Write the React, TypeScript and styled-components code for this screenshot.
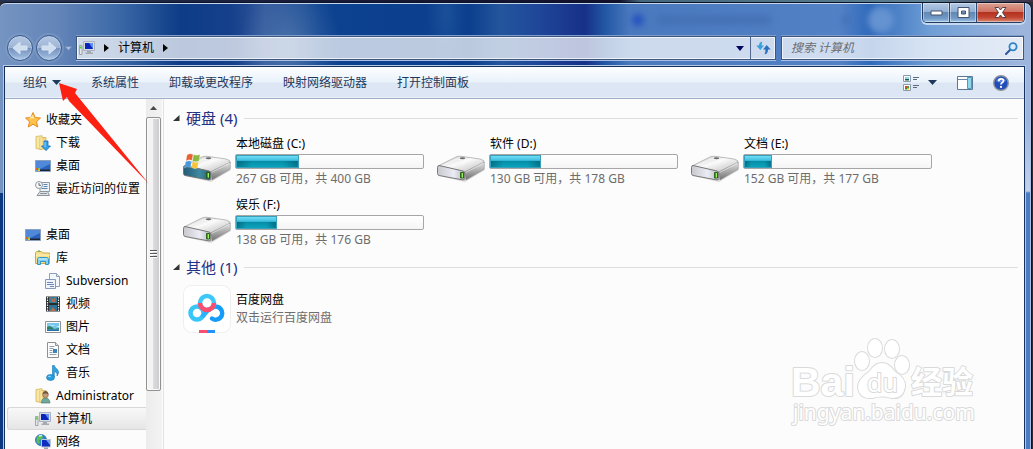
import React from "react";
import styled, { createGlobalStyle, css } from "styled-components";

const GlobalStyle = createGlobalStyle`
  *, *::before, *::after { box-sizing: border-box; }
  body {
    margin: 0;
    overflow: hidden;
    background: #1c2130;
    color: #000;
    font: 12px/16px "Noto Sans", "Noto Sans CJK SC", sans-serif;
  }
  button, input { font: inherit; color: inherit; }
  svg { display: block; flex: none; }
`;

const plainButton = css`
  margin: 0;
  padding: 0;
  border: 0;
  background: none;
  cursor: default;
`;

const Desktop = styled.div`
  height: 100vh;
  padding: 2px 1px 0 0;
  background: linear-gradient(90deg, #26324e 0%, #181b38 30%, #14102c 60%, #46687c 62%, #5c7f92 90%, #403048 100%) top / 100% 2px no-repeat, #2b2c34;
`;

const Window = styled.main`
  display: flex;
  flex-direction: column;
  height: 100%;
  padding: 0 6px 0 4px;
  border: solid #0b1426;
  border-width: 1px 1px 0 0;
  border-radius: 6px 7px 0 0;
  box-shadow: inset 0 1px #c5d7ef, inset -1px 0 #a9bfe4;
  background:
    radial-gradient(ellipse 50px 80px at 290px 45px, #6d91bb88, transparent),
    radial-gradient(ellipse 20px 60px at 446px 10px, #2f68ac66, transparent),
    linear-gradient(transparent 190px, #0d3980 190px) left / 5px 100% no-repeat,
    linear-gradient(#9db5dd 120px, #c3d2eb 188px, #4a7bc3 190px) right / 7px 100% no-repeat,
    linear-gradient(90deg, #7594c1 0, #6284b8 60px, #3a68a6 120px, #0e3c86 180px, #153f8a 230px, #30569b 265px, #0c4290 320px, #0c3f8d 470px, #23559c 500px, #20489a 535px, #173088 585px, #2257a4 605px, #4a79be 630px, #5381c6 840px, #2f6abb 870px, #6f9ed5 930px, #9db5dd 1020px);
`;

const TitleBar = styled.header`
  display: flex;
  justify-content: space-between;
  flex: none;
  height: 33px;
`;

const BackdropTab = styled.div`
  display: flex;
  align-items: center;
  gap: 14px;
  margin-left: auto;
  padding-right: 28px;
  filter: blur(3px);
`;

const BackdropDot = styled.span<{ $large?: boolean }>`
  width: ${(p) => (p.$large ? 26 : 12)}px;
  height: ${(p) => (p.$large ? 26 : 12)}px;
  margin-left: ${(p) => (p.$large ? 4 : 0)}px;
  border-radius: 50%;
  background: ${(p) => (p.$large ? "#6592d0" : "#2452c0")};
`;

const BackdropLine = styled.span<{ $width: number; $push?: boolean }>`
  width: ${(p) => p.$width}px;
  height: 8px;
  margin-left: ${(p) => (p.$push ? 58 : 0)}px;
  background: #4470b4;
`;

const CaptionButtons = styled.div`
  display: flex;
  height: 20px;
  border: 1px solid #253b62;
  border-top: 0;
  border-radius: 0 0 5px 5px;
  box-shadow: 0 1px 0 1px #c4d8f0;
  overflow: hidden;
`;

const CaptionButton = styled.button<{ $close?: boolean }>`
  ${plainButton}
  display: grid;
  place-items: center;
  width: ${(p) => (p.$close ? 47 : 27)}px;
  border-right: ${(p) => (p.$close ? "0" : "1px solid #304a74")};
  box-shadow: inset 0 0 0 1px #ffffff66;
  background: ${(p) =>
    p.$close
      ? "linear-gradient(#dba293, #cf7464 45%, #b4321f 50%, #c14431 75%, #d98a72)"
      : "linear-gradient(#b4c9e4, #92b0d4 45%, #6288b6 50%, #7299c6 80%, #9cc3e4)"};
`;

const NavRow = styled.div`
  display: flex;
  flex: none;
  height: 24px;
  margin-bottom: 6px;
  padding-right: 1px;
`;

const History = styled.nav`
  display: flex;
  align-items: center;
  gap: 3px;
  width: 72px;
  padding-left: 3px;
`;

const RoundButton = styled.button`
  ${plainButton}
  display: grid;
  place-items: center;
  width: 26px;
  height: 26px;
  border: 1px solid #3d5c8d;
  border-radius: 50%;
  background: linear-gradient(#b4c8e3, #9db5d6 48%, #7794c0 52%, #8fadd4 80%, #b6cde9);
  box-shadow: inset 0 0 0 1px #c6d6eb99, 0 0 0 2px #8aa5cb66;
`;

const HistoryMenu = styled.button`
  ${plainButton}
  padding: 4px 0;
`;

const glassField = css`
  border: 1px solid #3d5680;
  background: #ffffffb8;
  box-shadow: inset 0 0 0 1px #ffffffb0, 0 1px #a9c0e0, 0 -1px #7f9dca;
`;

const AddressBar = styled.div`
  ${glassField}
  display: flex;
  align-items: center;
  flex: 1;
  min-width: 200px;
  margin-right: 5px;
  padding-left: 2px;
`;

const Crumb = styled.button`
  ${plainButton}
  display: flex;
  align-items: center;
  gap: 9px;
  height: 20px;
  padding-left: 9px;
`;

const AddressMenu = styled.button`
  ${plainButton}
  margin-left: auto;
  padding: 6px;
`;

const Refresh = styled.button`
  ${plainButton}
  align-self: stretch;
  display: grid;
  place-items: center;
  width: 25px;
  border-left: 1px solid #53698f;
`;

const SearchBox = styled.label`
  ${glassField}
  display: flex;
  align-items: center;
  width: 243px;
  padding: 0 5px 0 9px;
`;

const SearchInput = styled.input`
  flex: 1;
  min-width: 0;
  padding: 0;
  border: 0;
  outline: 0;
  background: none;
  font-style: italic;
  &::placeholder { color: #6a6d73; opacity: 1; }
`;

const Frame = styled.div`
  display: flex;
  flex-direction: column;
  flex: 1;
  min-height: 0;
  border: solid #14305c;
  border-width: 1px 1px 0;
  box-shadow: 0 0 0 1px #b4c9e6;
  background: #fcfcfc;
`;

const Toolbar = styled.div`
  display: flex;
  align-items: center;
  flex: none;
  height: 32px;
  padding: 0 15px 0 3px;
  border-bottom: 1px solid #a0afc9;
  box-shadow: inset 0 -1px #e9f0f9;
  background: linear-gradient(#fdfeff, #eaf2fb 48%, #dde7f4 52%, #dce6f4);
`;

const Command = styled.button`
  ${plainButton}
  display: flex;
  align-items: center;
  gap: 5px;
  padding: 0 15px;
  color: #1e395b;
`;

const ViewTools = styled.div`
  display: flex;
  align-items: center;
  gap: 20px;
  margin-left: auto;
`;

const ToolButton = styled.button`
  ${plainButton}
  display: flex;
  align-items: center;
  gap: 9px;
`;

const Body = styled.div`
  display: flex;
  flex: 1;
  min-height: 0;
`;

const Sidebar = styled.nav`
  width: 141px;
  padding: 9px 0 0 2px;
  overflow: hidden;
`;

const Tree = styled.ul`
  margin: 0 0 23px;
  padding: 0;
  list-style: none;
`;

const TreeItem = styled.button<{ $level: number; $selected?: boolean }>`
  ${plainButton}
  display: flex;
  align-items: center;
  gap: 5px;
  width: 100%;
  height: 23px;
  padding-left: ${(p) => 17 + p.$level * 10}px;
  border: 1px solid transparent;
  border-right: 0;
  white-space: nowrap;
  ${(p) =>
    p.$selected &&
    css`
      border-color: #d8d8d8;
      border-radius: 3px 0 0 3px;
      background: linear-gradient(#f8f8f8, #e6e6e6);
    `}
`;

const ScrollTrack = styled.div`
  display: flex;
  flex-direction: column;
  width: 16px;
  padding-right: 1px;
  background: linear-gradient(90deg, #ececec, #f3f3f3);
`;

const ScrollArrow = styled.button`
  ${plainButton}
  display: grid;
  place-items: center;
  height: 18px;
`;

const ScrollThumb = styled.div`
  display: grid;
  place-items: center;
  height: 274px;
  border: 1px solid #929292;
  border-radius: 2px;
  box-shadow: inset 0 0 0 1px #fafafa;
  background: linear-gradient(90deg, #f4f4f4 45%, #dcdcde 50%, #c9cacd);
`;

const Content = styled.section`
  flex: 1;
  min-width: 0;
  padding: 9px 6px 0 9px;
  border-left: 1px solid #d6e4f5;
  margin-left: 1px;
`;

const Group = styled.section`
  margin-bottom: 9px;
`;

const GroupHeader = styled.h2`
  display: flex;
  align-items: center;
  margin: 0 0 8px;
  font-size: 15px;
  line-height: 20px;
  font-weight: 400;
  color: #1e3287;
  &::after {
    content: "";
    flex: 1;
    height: 1px;
    margin-left: 7px;
    background: #dedede;
  }
`;

const GroupToggle = styled.button`
  ${plainButton}
  width: 13px;
`;

const Items = styled.div`
  display: grid;
  grid-template-columns: repeat(auto-fill, 254px);
  row-gap: 10px;
  padding-left: 10px;
`;

const Item = styled.article`
  display: flex;
  align-items: center;
  gap: 4px;
`;

const ItemText = styled.div`
  display: flex;
  flex-direction: column;
  gap: 2px;
`;

const ItemName = styled.div`
  padding-left: 1px;
`;

const ItemNote = styled.div`
  padding-left: 1px;
  color: #6d6d6d;
  white-space: nowrap;
`;

const Meter = styled.div`
  width: 189px;
  height: 15px;
  padding: 1px 4px 1px 1px;
  border: 1px solid #a6a6a6;
  border-radius: 2px;
  background: linear-gradient(#fff, #f5f5f5);
`;

const MeterFill = styled.div`
  height: 100%;
  box-shadow: 0 0 0 1px #3a9fb9;
  background:
    linear-gradient(90deg, #00485a77, transparent 25%, transparent 75%, #00485a77) bottom / 100% 58% no-repeat,
    linear-gradient(#6fdcf5, #3fbfe0 40%, #068ba5 45%, #0aa4bd);
`;

const Watermark = styled.svg`
  position: absolute;
  right: 50px;
  bottom: 16px;
  pointer-events: none;
`;

const PointerArrow = styled.svg`
  position: absolute;
  left: 59px;
  top: 82px;
  pointer-events: none;
`;

function Caret() {
  return (
    <svg width="9" height="5" viewBox="0 0 9 5">
      <path d="M0 0h9L4.500 5z" fill="#1e395b" />
    </svg>
  );
}

function RightCaret() {
  return (
    <svg width="5" height="8" viewBox="0 0 5 8">
      <path d="M0 0l5 4-5 4z" fill="#050505" />
    </svg>
  );
}

function NavArrow({ back }: { back?: boolean }) {
  return (
    <svg width="18" height="16" viewBox="0 0 18 16">
      <path
        d={back ? "M2 8l7-6v4h7v4H9v4z" : "M16 8L9 2v4H2v4h7v4z"}
        fill="#d0dff0"
        stroke="#d7e3f1"
        strokeLinejoin="round"
      />
    </svg>
  );
}

type IconName =
  | "star" | "download" | "desktop" | "recent" | "library" | "subversion"
  | "video" | "picture" | "document" | "music" | "user" | "computer" | "network";

const folder = (
  <>
    <path d="M1 1.500l6-.8v14L1 13.500z" fill="#f8e7a0" stroke="#d3b45c" strokeWidth=".8" />
    <path d="M5 2.500h6v11.500H5z" fill="#f0d684" stroke="#cfae55" strokeWidth=".7" />
    <path d="M6 2v12" stroke="#fff4c3" />
  </>
);

const icons: Record<IconName, React.ReactNode> = {
  star: (
    <>
      <path d="M8 .5l2.200 5 5.300.5-4 3.600 1.200 5.400L8 12.200 3.300 15l1.200-5.400L.5 6l5.300-.5z" fill="#fdc14c" stroke="#e58a20" strokeLinejoin="round" />
      <path d="M8 3l1.300 3.500H4z" fill="#ffe9a6" />
    </>
  ),
  download: (
    <>
      {folder}
      <path d="M9 6h4v5h2.500L11 15.600 6.500 11H9z" fill="#34a2e8" stroke="#1769b6" strokeWidth=".8" />
      <path d="M10 7v5" stroke="#93dafd" />
    </>
  ),
  desktop: (
    <>
      <path d="M.5 2.500h15v11H.5z" fill="#2a63bf" stroke="#8ba0bd" />
      <path d="M1 3h14v3L5 11H1z" fill="#5089da" />
      <path d="M1 11.500h14V13H1z" fill="#1c2532" />
      <path d="M1 10h2v2H1z" fill="#e4572e" />
      <path d="M3 10h2v2H3z" fill="#8cc63f" />
      <path d="M1 12h2v1H1z" fill="#35a7ee" />
      <path d="M3 12h2v1H3z" fill="#fbc531" />
    </>
  ),
  recent: (
    <>
      <path d="M5 1.500h9.500v9H5z" fill="#eef2f6" stroke="#929ba5" />
      <path d="M8.500 3.500h4M8.500 5.500h4M6.500 7.500h6" stroke="#5d88b4" />
      <path d="M2 14.500h12.500l-2-4H5z" fill="#dfe3e8" stroke="#8c949d" />
      <path d="M5 12.500h7" stroke="#8a929b" />
      <circle cx="4" cy="4" r="3.500" fill="#f6f8fa" stroke="#9098a1" />
      <path d="M4 2v2.300h2" fill="none" stroke="#596878" />
    </>
  ),
  library: (
    <>
      <path d="M.5 2.500l1-1h5l1 1.500h7v10.500H.5z" fill="#f6df8b" stroke="#cbaa4d" />
      <path d="M3 1h2" stroke="#3db54a" />
      <path d="M1 5h14" stroke="#fff3c1" />
      <path d="M2.500 14.500v-5q0-2 2-2h7q2 0 2 2v5h-3v-3h-5v3z" fill="#7fd0f2" stroke="#3494c7" />
      <path d="M3.500 9h9" stroke="#d3f2ff" />
    </>
  ),
  subversion: (
    <>
      <path d="M4.500.5h7l3 3v10h-10z" fill="#f4f8fc" stroke="#8e9fb9" />
      <path d="M11.500.5v3h3" fill="#d4e0ef" stroke="#8e9fb9" />
      <path d="M.5 6.500h10v9H.5z" fill="#eef4fa" stroke="#8498b9" />
      <path d="M2 9.500h6M2 11.500h7M5 13.500h4" stroke="#7184b5" />
    </>
  ),
  video: (
    <>
      <path d="M1 .5h14v15H1z" fill="#272b2e" />
      <path d="M4 1h8v6H4z" fill="#347e9e" />
      <path d="M4 9h8v6H4z" fill="#2d7398" />
      <path d="M5 1l3 2.500L11 1l-1 5H7zM5 15l3-4 3 4z" fill="#b56c4f" />
      <path d="M2.500 1v15M13.500 1v15" stroke="#eee" strokeDasharray="1.500 1" strokeWidth="1.200" />
    </>
  ),
  picture: (
    <>
      <path d="M.5 2.500h15v11H.5z" fill="#fff" stroke="#929292" />
      <path d="M2 4h12v8H2z" fill="#74c6ec" />
      <path d="M2 5q6 1 12 3v-1H8z" fill="#e8fbff" />
      <path d="M2 8q4-2 7 2l5-1v1.500H2z" fill="#2f7f61" />
      <path d="M2 10.500h12V12H2z" fill="#2271aa" />
    </>
  ),
  document: (
    <>
      <path d="M2.500.5h8l3 3v12h-11z" fill="#fdfdfd" stroke="#909090" />
      <path d="M10.500.5v3h3" fill="#e1e1e1" stroke="#909090" />
      <path d="M4.500 4.500h5M4.500 6.500h4M4.500 8.500h3M4.500 10.500h3M4.500 12.500h7" stroke="#90a0b1" />
      <path d="M8 7h4v4H8z" fill="#3f83bd" />
    </>
  ),
  music: (
    <>
      <path d="M7.500.5h1.800Q10 3 12.500 4.500 15 7.500 12 11q.8-3.500-2.700-4.500V12H7.500z" fill="#30a3df" stroke="#1876b5" strokeWidth=".6" />
      <ellipse cx="5.500" cy="12.500" rx="4" ry="3" fill="#279ddd" stroke="#1876b5" strokeWidth=".6" />
      <ellipse cx="4.500" cy="11.500" rx="1.500" ry=".8" fill="#8bd7fb" />
    </>
  ),
  user: (
    <>
      {folder}
      <path d="M6.500 15q0-5 4-5t4.500 5z" fill="#72a79b" stroke="#4d8075" strokeWidth=".7" />
      <circle cx="10.500" cy="7" r="2.800" fill="#c39b74" stroke="#8a6a4b" strokeWidth=".7" />
      <path d="M7.500 6q.5-3 3-3t3 3q-3-1-6 0z" fill="#74583f" />
    </>
  ),
  computer: (
    <>
      <path d="M.5 5.500h2.500v9H.5z" fill="#e6e8ea" stroke="#8e959d" strokeWidth=".8" />
      <path d="M1 6.500h1.800v2H1z" fill="#5acb43" />
      <path d="M4.500 1.500h11v9h-11z" fill="#d8dde4" stroke="#aab2bd" />
      <path d="M6 3h8v6H6z" fill="#0b24b9" />
      <path d="M10 3h4v6z" fill="#5d8ff0" />
      <path d="M8 11h4v1.500h2V14H6.500v-1.500H8z" fill="#a4aab1" />
    </>
  ),
  network: (
    <>
      <circle cx="6" cy="6" r="5.500" fill="#2f84d5" stroke="#2265ab" strokeWidth=".8" />
      <path d="M2 3q3-3 6-1L7 5 4 6l1 3-2 1Q.5 7 2 3z" fill="#61c150" />
      <path d="M4 2l3-.8" stroke="#c9f5f3" strokeWidth="1.500" />
      <path d="M6.500 5.500h9v7.500h-9z" fill="#0f2fc0" stroke="#bfc7d2" />
      <path d="M11 6h4v5z" fill="#6c99f2" />
      <path d="M9 13.500h4v2H9z" fill="#9aa1aa" />
    </>
  ),
};

function Icon({ name }: { name: IconName }) {
  return (
    <svg width="16" height="16" viewBox="0 0 16 16">
      {icons[name]}
    </svg>
  );
}

function DriveIcon({ system }: { system?: boolean }) {
  return (
    <svg width="48" height="40" viewBox="0 -13 48 40">
      <defs>
        <linearGradient id="drive-top" x2="1" y2="1">
          <stop stopColor="#c4c4c4" />
          <stop offset=".45" stopColor="#fafafa" />
          <stop offset="1" stopColor="#b8b8b8" />
        </linearGradient>
        <linearGradient id="drive-front" x2="1" y2="0">
          <stop stopColor="#c8c8ce" />
          <stop offset=".6" stopColor="#ececf6" />
          <stop offset="1" stopColor="#b4b4ba" />
        </linearGradient>
        <linearGradient id="drive-system" x2="1" y2="0">
          <stop stopColor="#245a74" />
          <stop offset=".6" stopColor="#3f8ba0" />
          <stop offset="1" stopColor="#2a5f70" />
        </linearGradient>
        <linearGradient id="drive-side" x2="0" y2="1">
          <stop stopColor="#e4e4e4" />
          <stop offset="1" stopColor="#707070" />
        </linearGradient>
      </defs>
      <path d="M2 21l26 6 20-12-1-3-19 12z" fill="#0002" />
      <path d="M1 11L19 2q2-1 5-.7L43 4q5 1 4 4L28 17 3 11z" fill="url(#drive-top)" stroke="#a2a2a2" strokeWidth=".7" />
      <path d="M47.300 7v6q0 1-1 1.700L29 25l-1.500-8z" fill="url(#drive-side)" stroke="#8c8c8c" strokeWidth=".5" />
      <path d="M2 10.500L26 16q1.700.5 1.700 2v5.500q0 1.800-2 1.400L2 20.500Q.5 20 .5 18.500v-6q0-2 1.500-2z" fill={system ? "url(#drive-system)" : "url(#drive-front)"} stroke="#6e6e6e" strokeWidth=".9" />
      <path d="M28.500 17.500L46 8.500M6 10.500L20 4l10 1.500-6 6" fill="none" stroke="#fff" strokeWidth=".8" opacity=".6" />
      <ellipse cx="25.500" cy="3.200" rx="2.700" ry="1" fill="#6c6c6c" />
      <path d="M23.500 17.500h3v5.500h-3z" fill="#3fae12" stroke="#1d4d10" strokeWidth=".8" />
      <path d="M25.500 18v4.500" stroke="#9bf25f" />
      {system && (
        <g stroke="#ffffff77" strokeWidth=".5">
          <path d="M4 0q3-2 6-.5L9 5.500q-3-1.500-6 .5z" fill="#e8622f" />
          <path d="M10.500-.5q3 1.500 6.500 0L16 6q-3 1.500-6.500 0z" fill="#8aba3f" />
          <path d="M2.500 7q3-2 6-.5l-1 6q-3-1.500-6 .5z" fill="#4798dd" />
          <path d="M9.500 6.500q3 1.500 6 .5l-1 6q-3 1.500-6-.5z" fill="#f8c33a" />
        </g>
      )}
    </svg>
  );
}

function NetdiskIcon() {
  return (
    <svg width="48" height="48" viewBox="0 0 48 48">
      <rect x=".5" y=".5" width="47" height="47" rx="8" fill="#fff" stroke="#efefef" />
      <g fill="none" strokeWidth="4.500">
        <circle cx="14" cy="28" r="6.500" stroke="#38c5f8" />
        <path d="M26 24l-7 8" stroke="#28b3fa" />
        <path d="M29 33.500a6.500 6.500 0 1 0 .5-11" stroke="#149cf8" strokeLinecap="round" />
        <circle cx="24" cy="18" r="7" stroke="#3ec8fa" />
        <path d="M17 18a7 7 0 0 0 14 0" stroke="#fb4d6e" />
      </g>
      <path d="M16 45h8v3h-8z" fill="#fb4d6e" />
      <path d="M24 45h8v3h-8z" fill="#2293fc" />
    </svg>
  );
}

function ViewIcon() {
  return (
    <svg width="16" height="16" viewBox="0 0 16 16">
      <path d="M.5.5h7v6h-7zM.5 9.500h7v6h-7z" fill="#fff" stroke="#8c9aae" />
      <path d="M2 2h4v2H2z" fill="#8fd5ec" />
      <path d="M2 4h4v1.500H2z" fill="#1c5a51" />
      <path d="M2 11h2v2H2z" fill="#d54b2c" />
      <path d="M4 11h2v2H4z" fill="#45a23c" />
      <path d="M2 13h2v1.500H2z" fill="#2a8b39" />
      <path d="M4 13h2v1.500H4z" fill="#e3b427" />
      <path d="M10 2.500h6M10 4.500h4M10 10.500h6M10 12.500h4" stroke="#5b6b80" />
    </svg>
  );
}

function PaneIcon() {
  return (
    <svg width="16" height="14" viewBox="0 0 16 14">
      <path d="M.5.500h15v13H.5z" fill="#fff" stroke="#5d7896" />
      <path d="M1 3.500h9" stroke="#6d86a2" />
      <path d="M10.500 1.500h4v11h-4z" fill="#8dd8ef" stroke="#4c9cbd" />
    </svg>
  );
}

function HelpIcon() {
  return (
    <svg width="16" height="16" viewBox="0 0 16 16">
      <circle cx="8" cy="8" r="7.300" fill="#214dbb" stroke="#8d939d" strokeWidth="1.400" />
      <path d="M3 6a5.500 5.500 0 0 1 10 0q-5 3-10 0z" fill="#5c86da" />
      <path d="M5.700 6.200q0-2.400 2.400-2.400t2.400 2Q10.500 7 8.800 8 8 8.500 8 9.600" fill="none" stroke="#fff" strokeWidth="1.700" />
      <circle cx="8" cy="11.900" r="1.100" fill="#fff" />
    </svg>
  );
}

interface TreeEntry {
  icon: IconName;
  label: string;
  level: number;
}

const favorites: TreeEntry[] = [
  { icon: "star", label: "收藏夹", level: 0 },
  { icon: "download", label: "下载", level: 1 },
  { icon: "desktop", label: "桌面", level: 1 },
  { icon: "recent", label: "最近访问的位置", level: 1 },
];

const places: TreeEntry[] = [
  { icon: "desktop", label: "桌面", level: 0 },
  { icon: "library", label: "库", level: 1 },
  { icon: "subversion", label: "Subversion", level: 2 },
  { icon: "video", label: "视频", level: 2 },
  { icon: "picture", label: "图片", level: 2 },
  { icon: "document", label: "文档", level: 2 },
  { icon: "music", label: "音乐", level: 2 },
  { icon: "user", label: "Administrator", level: 1 },
  { icon: "computer", label: "计算机", level: 1 },
  { icon: "network", label: "网络", level: 1 },
];

const drives = [
  { name: "本地磁盘 (C:)", free: 267, total: 400, system: true },
  { name: "软件 (D:)", free: 130, total: 178 },
  { name: "文档 (E:)", free: 152, total: 177 },
  { name: "娱乐 (F:)", free: 138, total: 176 },
];

function TreeList({ entries }: { entries: TreeEntry[] }) {
  return (
    <Tree>
      {entries.map((e) => (
        <li key={e.label}>
          <TreeItem $level={e.level} $selected={e.icon === "computer"}>
            <Icon name={e.icon} />
            {e.label}
          </TreeItem>
        </li>
      ))}
    </Tree>
  );
}

function GroupTitle({ children }: { children: React.ReactNode }) {
  return (
    <GroupHeader>
      <GroupToggle aria-label="折叠">
        <svg width="7" height="6" viewBox="0 0 7 6">
          <path d="M6.500 0v6H0z" fill="#333" />
        </svg>
      </GroupToggle>
      {children}
    </GroupHeader>
  );
}

export default function App() {
  return (
    <Desktop>
      <GlobalStyle />
      <Window>
        <TitleBar>
          <BackdropTab aria-hidden="true">
            <BackdropDot />
            <BackdropLine $width={112} />
            <BackdropLine $width={8} $push />
            <BackdropDot $large />
          </BackdropTab>
          <CaptionButtons>
            <CaptionButton aria-label="最小化">
              <svg width="13" height="6" viewBox="0 0 13 6">
                <path d="M1 1h11v4H1z" fill="#fff" stroke="#45536b" />
              </svg>
            </CaptionButton>
            <CaptionButton aria-label="最大化">
              <svg width="13" height="11" viewBox="0 0 13 11">
                <path d="M1 .5h11v10H1zM4.500 4v3h4V4z" fill="#fff" fillRule="evenodd" stroke="#45536b" />
              </svg>
            </CaptionButton>
            <CaptionButton $close aria-label="关闭">
              <svg width="13" height="11" viewBox="0 0 13 11">
                <path d="M1 .500h3.500l2 2.500 2-2.500H12L8.500 5.500l3.500 5H8.500l-2-2.500-2 2.500H1l3.500-5z" fill="#fff" stroke="#51414a" />
              </svg>
            </CaptionButton>
          </CaptionButtons>
        </TitleBar>

        <NavRow>
          <History>
            <RoundButton aria-label="后退"><NavArrow back /></RoundButton>
            <RoundButton aria-label="前进"><NavArrow /></RoundButton>
            <HistoryMenu aria-label="历史记录">
              <svg width="7" height="5" viewBox="0 0 7 5">
                <path d="M0 .5h7L3.500 4.500z" fill="#a9bddb" stroke="#6785b5" strokeWidth=".6" />
              </svg>
            </HistoryMenu>
          </History>
          <AddressBar>
            <Icon name="computer" />
            <Crumb><RightCaret />计算机<RightCaret /></Crumb>
            <AddressMenu aria-label="以前的位置">
              <svg width="8" height="5" viewBox="0 0 8 5"><path d="M0 0h8L4 5z" fill="#040461" /></svg>
            </AddressMenu>
            <Refresh aria-label="刷新">
              <svg width="15" height="14" viewBox="0 0 15 14">
                <path d="M6.500.8Q3 1 3 4.500H.3L4.300 9l3.800-4.500H5.700Q5.500 2 6.500.8z" fill="#36a1d8" />
                <path d="M8.500 13.300q3.500-.3 3.500-4.800h2.700L10.700 4 7 8.500h2.400q.3 3-.9 4.800z" fill="#2b6fc0" />
              </svg>
            </Refresh>
          </AddressBar>
          <SearchBox>
            <SearchInput type="search" placeholder="搜索 计算机" aria-label="搜索 计算机" />
            <svg width="13" height="13" viewBox="0 0 13 13">
              <path d="M1 12l5-5" stroke="#2c559c" strokeWidth="2" strokeLinecap="round" />
              <circle cx="8" cy="4.800" r="3.600" fill="#dcecf9" stroke="#2e84c6" strokeWidth="1.800" />
            </svg>
          </SearchBox>
        </NavRow>

        <Frame>
          <Toolbar>
            <Command>组织<Caret /></Command>
            <Command>系统属性</Command>
            <Command>卸载或更改程序</Command>
            <Command>映射网络驱动器</Command>
            <Command>打开控制面板</Command>
            <ViewTools>
              <ToolButton aria-label="更改视图"><ViewIcon /><Caret /></ToolButton>
              <ToolButton aria-label="预览窗格"><PaneIcon /></ToolButton>
              <ToolButton aria-label="帮助"><HelpIcon /></ToolButton>
            </ViewTools>
          </Toolbar>

          <Body>
            <Sidebar>
              <TreeList entries={favorites} />
              <TreeList entries={places} />
            </Sidebar>
            <ScrollTrack>
              <ScrollArrow aria-label="向上滚动">
                <svg width="7" height="4" viewBox="0 0 7 4"><path d="M0 4h7L3.500 0z" fill="#4a4a4a" /></svg>
              </ScrollArrow>
              <ScrollThumb>
                <svg width="7" height="9" viewBox="0 0 7 9">
                  <path d="M0 .5h7M0 3.500h7M0 6.500h7" stroke="#555" />
                  <path d="M0 1.500h7M0 4.500h7M0 7.500h7" stroke="#fff" />
                </svg>
              </ScrollThumb>
            </ScrollTrack>

            <Content>
              <Group>
                <GroupTitle>硬盘 (4)</GroupTitle>
                <Items>
                  {drives.map((d) => (
                    <Item key={d.name}>
                      <DriveIcon system={d.system} />
                      <ItemText>
                        <ItemName>{d.name}</ItemName>
                        <Meter role="meter" aria-label={d.name} aria-valuemin={0} aria-valuemax={d.total} aria-valuenow={d.total - d.free}>
                          <MeterFill style={{ width: `${((d.total - d.free) / d.total) * 100}%` }} />
                        </Meter>
                        <ItemNote>{d.free} GB 可用，共 {d.total} GB</ItemNote>
                      </ItemText>
                    </Item>
                  ))}
                </Items>
              </Group>
              <Group>
                <GroupTitle>其他 (1)</GroupTitle>
                <Items>
                  <Item>
                    <NetdiskIcon />
                    <ItemText>
                      <ItemName>百度网盘</ItemName>
                      <ItemNote>双击运行百度网盘</ItemNote>
                    </ItemText>
                  </Item>
                </Items>
              </Group>
            </Content>
          </Body>
        </Frame>
      </Window>

      <PointerArrow width="92" height="104" viewBox="0 0 92 104">
        <path d="M0 1l18 6-2 4 74 91L10 19l-2-4-4 4z" fill="#fb2012" />
      </PointerArrow>

      <Watermark width="194" height="96" viewBox="0 0 194 96">
        <g fill="#fff" stroke="#dadada" strokeWidth="2" strokeLinejoin="round" paintOrder="stroke">
          <text x="2" y="59" fontFamily="Liberation Sans" fontWeight="700" fontSize="41">Bai</text>
          <ellipse cx="73" cy="24" rx="7" ry="9" />
          <ellipse cx="86" cy="11" rx="7" ry="9" />
          <ellipse cx="103" cy="12" rx="7" ry="9" />
          <ellipse cx="113" cy="28" rx="7" ry="9" />
          <path d="M93 26q7 0 12 8 12 7 11 16-2 12-13 11-10-3-20 0-13 1-14-11 0-8 12-16 5-8 12-8z" />
          <text x="78" y="55" fontFamily="Noto Sans" fontSize="25">du</text>
          <text x="122" y="56" fontFamily="Noto Sans CJK SC" fontWeight="700" fontSize="31">经验</text>
          <text x="4" y="83" fontFamily="Noto Sans" fontSize="21">jingyan.baidu.com</text>
        </g>
      </Watermark>
    </Desktop>
  );
}
